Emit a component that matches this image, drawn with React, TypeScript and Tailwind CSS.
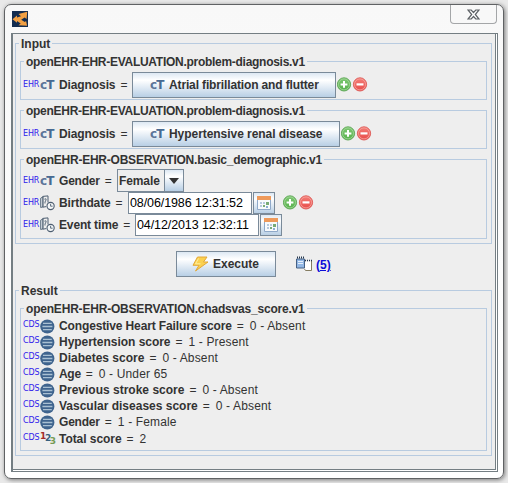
import type { ReactNode } from 'react';

function Group({ title, titleClass = '', className = '', children }: { title: string; titleClass?: string; className?: string; children: ReactNode }) {
  return (
    <section className={`flex flex-col border border-[#b8cbe0] ${className}`}>
      <h2 className={`-mt-[7px] ml-[3px] h-[14px] self-start whitespace-nowrap bg-[#eeeeee] px-[2px] text-[12px] leading-[14px] font-bold ${titleClass}`}>{title}</h2>
      {children}
    </section>
  );
}

function Tag({ children, className = '' }: { children: string; className?: string }) {
  return <span className={`w-[17px] shrink-0 font-['DejaVu_Sans'] text-[8px] leading-[10px] tracking-[-0.1px] text-[#3020ec] ${className}`}>{children}</span>;
}

function CodedText() {
  return (
    <span className="flex h-[14px] w-[15px] shrink-0 font-['DejaVu_Sans'] text-[12px] leading-[14px] font-bold tracking-[-0.8px]">
      <span className="text-[#5c7599]">c</span>
      <span className="text-[#486a92]">T</span>
    </span>
  );
}

function DateIcon() {
  return (
    <svg className="h-[16px] w-[15px] shrink-0" viewBox="0 0 15 16" fill="none" stroke="#4c5d70">
      <path d="M.7 3.2 3 1.8v10l-2.3.7z" fill="#dce3e8" strokeWidth=".9" />
      <path d="M2.8 1.4 8 .9v6.6M2.8 12.2l3.4-.6" strokeWidth="1" />
      <path d="M2.8 1.4v10.8" strokeWidth=".7" />
      <path d="M4.4 4.2q2.2-1.2 1.7.7L5 7v1.5" strokeWidth=".9" />
      <circle cx="10.6" cy="11" r="3.6" fill="#f5f7f8" strokeWidth="1.1" />
      <path d="M10.6 8.8v2.4h2" strokeWidth=".9" />
    </svg>
  );
}

function OrdinalIcon() {
  return (
    <svg className="h-[15px] w-[15px] shrink-0" viewBox="0 0 15 15">
      <circle cx="7.3" cy="7.5" r="7.1" fill="#3f648e" />
      <path d="M3 4.4h8.8M2.4 7.5h10M3 10.6h8.8" stroke="#a9c0d3" strokeWidth="1.3" />
    </svg>
  );
}

function CountIcon() {
  return (
    <span className="flex h-[16px] w-[15px] shrink-0 font-['DejaVu_Sans'] text-[9px] leading-[9px] font-bold tracking-[-1.4px]">
      <span className="pt-px text-[#a52c28]">1</span>
      <span className="pt-[3px] text-[#365f80]">2</span>
      <span className="pt-[6px] text-[#759b55]">3</span>
    </span>
  );
}

function PlusMinus() {
  return (
    <svg className="h-[15px] w-[31px] shrink-0" viewBox="0 0 31 15">
      <defs>
        <linearGradient id="green" x2="0" y2="1"><stop stopColor="#7fc873" /><stop offset="1" stopColor="#55b04a" /></linearGradient>
        <linearGradient id="red" x2="0" y2="1"><stop stopColor="#f47f78" /><stop offset="1" stopColor="#e84a48" /></linearGradient>
      </defs>
      <circle cx="7" cy="7.4" r="6.6" fill="url(#green)" stroke="#5aa452" strokeWidth=".9" />
      <circle cx="7" cy="7.4" r="5.5" fill="none" stroke="#a6d89c" strokeWidth=".8" />
      <path d="M7 4v6.8M3.6 7.4h6.8" stroke="#fff" strokeWidth="2" />
      <circle cx="23" cy="7.4" r="6.6" fill="url(#red)" stroke="#dc5753" strokeWidth=".9" />
      <circle cx="23" cy="7.4" r="5.5" fill="none" stroke="#f6a7a1" strokeWidth=".8" />
      <path d="M19.5 7.4h7" stroke="#fff" strokeWidth="2.2" />
    </svg>
  );
}

function Label({ text, className = '' }: { text: string; className?: string }) {
  return (
    <span className={`flex shrink-0 whitespace-nowrap pl-[4px] ${className}`}>
      <b>{text}</b>
      <span className="ml-[5px] tracking-normal">=</span>
    </span>
  );
}

const metal = 'border border-[#7a8a99] bg-linear-to-b from-[#dde8f3] via-[#ffffff] via-30% to-[#b8cfe5]';

function CalendarButton() {
  return (
    <button className={`ml-px flex h-[22px] w-[22px] shrink-0 items-center justify-center ${metal}`}>
      <svg className="h-[14px] w-[14px]" viewBox="0 0 14 14">
        <path d="M.5 1.5h13v12H.5z" fill="#f8fafc" stroke="#8fa9c9" />
        <path d="M0 0h14v4H0z" fill="#ee9a5b" />
        <path d="M3 6h2v2H3zM6 6h2v2H6zM3 9h2v2H3z" fill="#b7c9dd" />
        <path d="M9 6h3v3H9zM6 9h2v2H6z" fill="#78ab76" />
        <path d="M9 10h2v2H9z" fill="#8bafd2" />
      </svg>
    </button>
  );
}

function DiagnosisRow({ value, buttonClass, textClass }: { value: string; buttonClass: string; textClass: string }) {
  return (
    <div className="mt-[3px] flex h-[26px] items-center pl-[2px]">
      <Tag>EHR</Tag><CodedText />
      <Label text="Diagnosis" className="w-[77px] tracking-[-0.1px]" />
      <button className={`flex h-[26px] shrink-0 items-center whitespace-nowrap pl-[17px] ${buttonClass} ${metal}`}>
        <CodedText /><b className={`ml-[4px] ${textClass}`}>{value}</b>
      </button>
      <span className="ml-px flex pb-px"><PlusMinus /></span>
    </div>
  );
}

const results: [string, string, string][] = [
  ['Congestive Heart Failure score', '0 - Absent', 'tracking-[-0.13px]'],
  ['Hypertension score', '1 - Present', 'tracking-[-0.03px]'],
  ['Diabetes score', '0 - Absent', ''],
  ['Age', '0 - Under 65', 'tracking-[-0.3px]'],
  ['Previous stroke score', '0 - Absent', ''],
  ['Vascular diseases score', '0 - Absent', ''],
  ['Gender', '1 - Female', 'tracking-[-0.2px]'],
];

export default function App() {
  return (
    <main className="h-[483px] w-[508px] overflow-hidden bg-[#e9e9e9] pt-[4px] pl-[4px] font-['Liberation_Sans',Arial,sans-serif] text-[12px] leading-[14px] text-[#333]">
      <div className="flex h-[475px] w-[500px] flex-col rounded-[7px] border border-[#606264] bg-linear-to-b from-[#f8f8f8] to-white shadow-[1px_1px_4px_#777]">
        <header className="flex h-[28px] shrink-0 justify-between pl-[7px] pr-[6px]">
          <svg className="mt-[6px] h-[16px] w-[16px]" viewBox="0 0 16 16">
            <path d="M0 0h16v16H0z" fill="#132c50" />
            <path d="M.5 8.2 5 4.6v2l4-1.4L6.5 3 15.2.8 14.6 8l-2-1.6-3.4 2.4 3.6 2.2 1.3-1 1 4.8-8.6-.5 2.2-1.8-3.7-2.6v1.8z" fill="#f2a044" />
          </svg>
          <button className="flex h-[19px] w-[47px] items-center justify-center rounded-b-[4px] border border-t-0 border-[#a4a6a8] bg-[#f8f8f8]">
            <svg className="h-[11px] w-[13px]" viewBox="0 0 13 11">
              <path d="M1 1h3.2l2.3 2.5L8.8 1H12L8.3 5.5 12 10H8.8L6.5 7.5 4.2 10H1l3.7-4.5z" fill="#fff" stroke="#5c6064" strokeWidth="1.2" />
            </svg>
          </button>
        </header>
        <div className="ml-[6px] h-[439px] w-[487px] border border-l-2 border-[#747e83] bg-white pr-px pb-px">
          <div className="flex h-full flex-col border-r border-b border-[#747e83] bg-[#eeeeee] pt-[9px] pl-[2px]">
            <Group title="Input" className="h-[201px] w-[477px] shrink-0">
              <Group title="openEHR-EHR-EVALUATION.problem-diagnosis.v1" titleClass="tracking-[-0.28px]" className="mt-[10px] ml-[4px] h-[39px] w-[467px] shrink-0">
                <DiagnosisRow value="Atrial fibrillation and flutter" buttonClass="w-[204px]" textClass="tracking-[-0.14px]" />
              </Group>
              <Group title="openEHR-EHR-EVALUATION.problem-diagnosis.v1" titleClass="tracking-[-0.28px]" className="mt-[10px] ml-[4px] h-[39px] w-[467px] shrink-0">
                <DiagnosisRow value="Hypertensive renal disease" buttonClass="w-[208px]" textClass="tracking-[-0.05px]" />
              </Group>
              <Group title="openEHR-EHR-OBSERVATION.basic_demographic.v1" titleClass="tracking-[-0.23px]" className="mt-[10px] ml-[4px] h-[80px] w-[467px] shrink-0">
                <div className="mt-[2px] flex h-[23px] shrink-0 items-center pl-[2px]">
                  <Tag>EHR</Tag><CodedText />
                  <Label text="Gender" className="w-[62px] tracking-[-0.2px]" />
                  <button className="flex h-[23px] w-[67px] border border-[#7a8a99]">
                    <b className="flex h-full w-[47px] items-center pl-px tracking-[-0.1px]">Female</b>
                    <span className={`-my-px -mr-px flex h-[23px] w-[20px] items-center justify-center ${metal}`}>
                      <svg className="h-[6px] w-[10px]" viewBox="0 0 10 6"><path d="M0 0h10L5 6z" fill="#333" /></svg>
                    </span>
                  </button>
                </div>
                <div className="flex h-[22px] shrink-0 items-center pl-[2px]">
                  <Tag>EHR</Tag><DateIcon />
                  <Label text="Birthdate" className="w-[73px] tracking-[-0.12px]" />
                  <span className="flex h-[22px] w-[124px] items-center whitespace-nowrap border border-[#7a8a99] bg-white pl-px text-[12.5px] tracking-[-0.1px] text-black">08/06/1986 12:31:52</span>
                  <CalendarButton />
                  <span className="ml-[8px] flex pb-[2px]"><PlusMinus /></span>
                </div>
                <div className="flex h-[22px] shrink-0 items-center pl-[2px]">
                  <Tag>EHR</Tag><DateIcon />
                  <Label text="Event time" className="w-[80px] tracking-[-0.15px]" />
                  <span className="flex h-[22px] w-[124px] items-center whitespace-nowrap border border-[#7a8a99] bg-white pl-px text-[12.5px] tracking-[-0.1px] text-black">04/12/2013 12:32:11</span>
                  <CalendarButton />
                </div>
              </Group>
            </Group>
            <div className="flex h-[46px] shrink-0 items-center pb-[6px] pl-[161px]">
              <button className={`flex h-[26px] w-[100px] items-center pl-[15px] ${metal}`}>
                <svg className="h-[16px] w-[17px]" viewBox="0 0 17 16"><path d="M5.5 1h9.5l-3.5 5H16L3.5 15 7 9.3H1z" fill="#fbd150" stroke="#e3a838" /><path d="m6.5 2.5-3 5.3h5" fill="none" stroke="#fff0a0" /></svg>
                <b className="ml-[4px]">Execute</b>
              </button>
              <svg className="ml-[20px] h-[16px] w-[16px]" viewBox="0 0 16 16">
                <path d="M.5 3h8v9h-8z" fill="#92b7e5" stroke="#456084" /><path d="M1 1.5h8" stroke="#25364d" strokeWidth="2" strokeDasharray="1 1" /><path d="M2 5.5h5M2 7.5h5" stroke="#e4effb" />
                <path d="M9 5.5h6.5v9h-6l-.5-1z" fill="#fff" /><path d="M15.5 5v9.5h-6l-1-1.5" fill="none" stroke="#857c61" /><path d="M9 4.5h7" stroke="#25364d" strokeWidth="1.6" strokeDasharray="1 1" />
              </svg>
              <a className="ml-[4px] pt-px font-bold text-[#0c0cd8] underline">(5)</a>
            </div>
            <Group title="Result" className="h-[166px] w-[477px] shrink-0">
              <Group title="openEHR-EHR-OBSERVATION.chadsvas_score.v1" titleClass="tracking-[-0.2px]" className="mt-[10px] ml-[4px] h-[143px] w-[467px] shrink-0">
                <div className="mt-[2px] flex flex-col pl-[2px]">
                  {results.map(([label, value, cls]) => (
                    <div key={label} className="flex h-[16px] items-center whitespace-nowrap">
                      <Tag className="mb-[2px]">CDS</Tag><OrdinalIcon /><Label text={label} className={cls} /><span className="ml-[6px] tracking-[0.15px]">{value}</span>
                    </div>
                  ))}
                  <div className="flex h-[18px] items-center whitespace-nowrap">
                    <Tag className="mb-[2px]">CDS</Tag><CountIcon /><Label text="Total score" className="tracking-[-0.05px]" /><span className="ml-[6px]">2</span>
                  </div>
                </div>
              </Group>
            </Group>
          </div>
        </div>
      </div>
    </main>
  );
}
